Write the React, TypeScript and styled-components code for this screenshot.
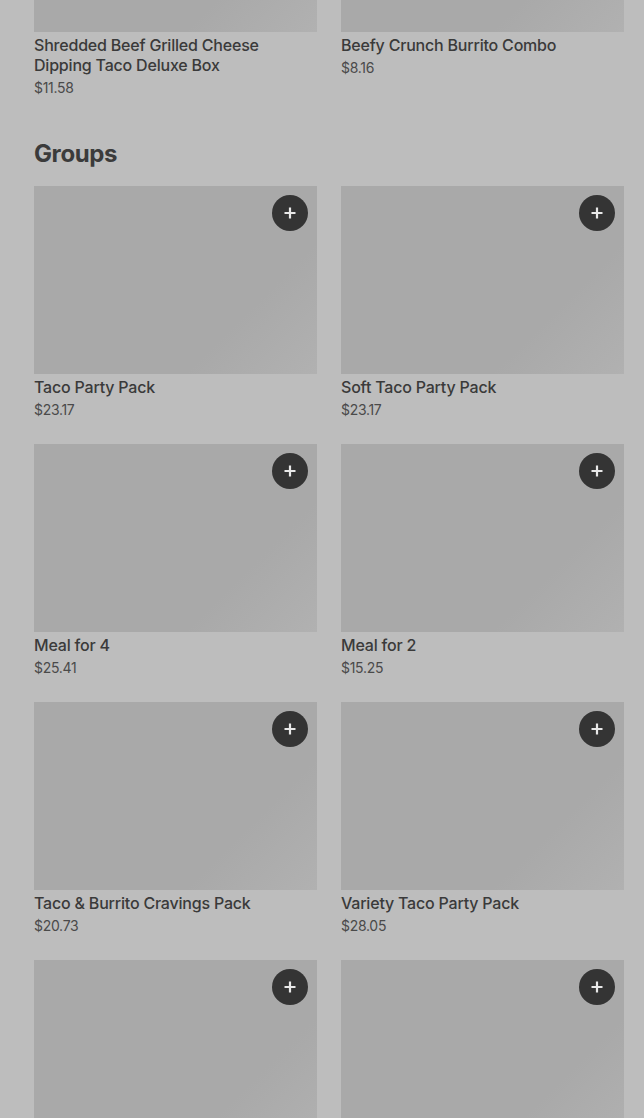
import styled, { createGlobalStyle } from "styled-components";

const GlobalStyle = createGlobalStyle`
  html, body {
    margin: 0;
    padding: 0;
    height: 1118px;
    overflow: hidden;
    background: #bdbdbd;
  }
  body {
    font-family: Inter, "Noto Sans", "Liberation Sans", sans-serif;
    color: #3a3a3a;
  }
`;

/* ------------------ Layout ------------------ */
const Page = styled.div`
  padding: 0 20px 0 34px;
  margin-top: -156px;
`;

const Section = styled.section`
  display: flex;
  flex-direction: column;
`;

const SectionTitle = styled.h2`
  margin: 0;
  padding: 40px 0 16px 0;
  font-size: 24px;
  line-height: 32px;
  font-weight: 700;
  letter-spacing: -0.4px;
  color: #3b3b3b;
`;

const Grid = styled.div`
  display: grid;
  grid-template-columns: 283px 283px;
  column-gap: 24px;
  row-gap: 24px;
`;

/* ------------------ Card ------------------ */
const Card = styled.div`
  display: flex;
  flex-direction: column;
`;

const ImageBox = styled.div`
  position: relative;
  height: 188px;
  background: linear-gradient(135deg, #a9a9a9 0%, #a9a9a9 72%, #b1b1b1 100%);
`;

const AddButton = styled.button`
  position: absolute;
  top: 9px;
  right: 9px;
  width: 36px;
  height: 36px;
  border-radius: 50%;
  border: none;
  background: #343434;
  color: #e8e8e8;
  display: flex;
  align-items: center;
  justify-content: center;
  padding: 0;
`;

const ItemName = styled.div`
  margin-top: 3px;
  font-size: 16px;
  line-height: 20px;
  font-weight: 500;
  letter-spacing: -0.2px;
  color: #3a3a3a;
`;

const Price = styled.div`
  margin-top: 3px;
  font-size: 14px;
  line-height: 20px;
  font-weight: 400;
  letter-spacing: -0.3px;
  color: #4a4a4a;
`;

type Item = { name: string; price: string };

const Plus = () => (
  <svg width="14" height="14" viewBox="0 0 14 14">
    <path d="M7 1.5v11M1.5 7h11" stroke="currentColor" strokeWidth="2.2" />
  </svg>
);

const ItemCard = ({ item, addable }: { item: Item; addable?: boolean }) => (
  <Card>
    <ImageBox>
      {addable && (
        <AddButton aria-label={`Add ${item.name}`}>
          <Plus />
        </AddButton>
      )}
    </ImageBox>
    <ItemName>{item.name}</ItemName>
    <Price>{item.price}</Price>
  </Card>
);

const combos: Item[] = [
  { name: "Shredded Beef Grilled Cheese Dipping Taco Deluxe Box", price: "$11.58" },
  { name: "Beefy Crunch Burrito Combo", price: "$8.16" },
];

const groups: Item[] = [
  { name: "Taco Party Pack", price: "$23.17" },
  { name: "Soft Taco Party Pack", price: "$23.17" },
  { name: "Meal for 4", price: "$25.41" },
  { name: "Meal for 2", price: "$15.25" },
  { name: "Taco & Burrito Cravings Pack", price: "$20.73" },
  { name: "Variety Taco Party Pack", price: "$28.05" },
];

// last row is only partly in view: images only, names fall below the fold
const lastRow = [0, 1];

export default function App() {
  return (
    <>
      <GlobalStyle />
      <Page>
        <Section>
          <Grid>
            {combos.map((c) => (
              <ItemCard key={c.name} item={c} />
            ))}
          </Grid>
        </Section>
        <Section>
          <SectionTitle>Groups</SectionTitle>
          <Grid>
            {groups.map((g) => (
              <ItemCard key={g.name} item={g} addable />
            ))}
            {lastRow.map((i) => (
              <Card key={i}>
                <ImageBox>
                  <AddButton aria-label="Add item">
                    <Plus />
                  </AddButton>
                </ImageBox>
              </Card>
            ))}
          </Grid>
        </Section>
      </Page>
    </>
  );
}
